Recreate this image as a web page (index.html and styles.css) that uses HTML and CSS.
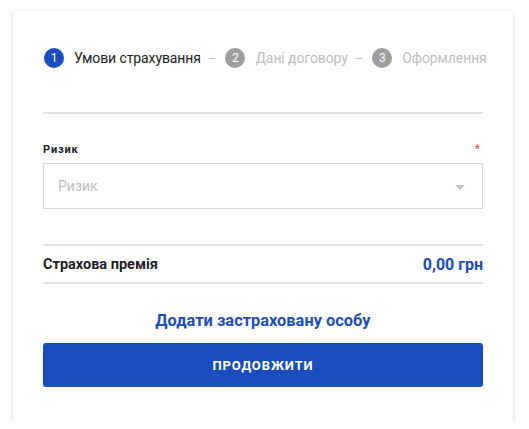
FILE: index.html
```html
<!DOCTYPE html>
<html lang="uk">
<head>
<meta charset="utf-8">
<link rel="stylesheet" href="styles.css">
</head>
<body>
<div class="card">
  <div class="steps">
    <div class="step active"><span class="num">1</span><span class="label">Умови страхування</span></div>
    <span class="dash">–</span>
    <div class="step"><span class="num">2</span><span class="label">Дані договору</span></div>
    <span class="dash">–</span>
    <div class="step"><span class="num">3</span><span class="label">Оформлення</span></div>
  </div>
  <div class="divider top-divider"></div>
  <div class="field">
    <div class="field-head"><span class="field-label">Ризик</span><span class="req">*</span></div>
    <div class="select">
      <span class="placeholder">Ризик</span>
      <svg class="arrow" width="10" height="5" viewBox="0 0 10 5"><path d="M0 0h10L5 5z" fill="#c4c4c4"/></svg>
    </div>
  </div>
  <div class="divider sum-top"></div>
  <div class="sum-row">
    <span class="sum-label">Страхова премія</span>
    <span class="sum-value">0,00 грн</span>
  </div>
  <div class="divider"></div>
  <div class="add-link">Додати застраховану особу</div>
  <button class="btn">ПРОДОВЖИТИ</button>
</div>
</body>
</html>
```
FILE: styles.css
```css
* { box-sizing: border-box; }
body {
  margin: 0;
  background: #fff;
  font-family: Roboto, "Noto Sans", sans-serif;
}
.card {
  margin: 11px 0 0 13px;
  width: 500px;
  height: 410px;
  background: #fff;
  box-shadow: 0 1px 4px rgba(0,0,0,0.18);
  border-radius: 2px;
  padding: 37px 30px 0 30px;
}
.steps {
  display: flex;
  align-items: center;
  height: 20px;
  white-space: nowrap;
  margin-left: 1px;
}
.step {
  display: flex;
  align-items: center;
}
.num {
  width: 20px;
  height: 20px;
  border-radius: 50%;
  background: #9e9e9e;
  color: #fff;
  font-size: 12px;
  display: flex;
  align-items: center;
  justify-content: center;
  margin-right: 10px;
}
.step.active .num { background: #1a4dbd; }
.label {
  font-size: 14px;
  letter-spacing: -0.1px;
  color: #bdbdbd;
}
.step.active .label { color: #212121; }
.dash {
  color: #bdbdbd;
  font-size: 13px;
  margin: 0 9px 0 7px;
}
.divider {
  height: 2px;
  background: #e0e0e0;
}
.top-divider { margin-top: 44px; }
.field { margin-top: 28px; }
.field-head {
  display: flex;
  justify-content: space-between;
  align-items: center;
  height: 14px;
}
.field-label {
  font-size: 11px;
  font-weight: 700;
  color: #212121;
  letter-spacing: 0.8px;
}
.req {
  color: #f44336;
  font-size: 12px;
  margin-right: 3px;
}
.select {
  margin-top: 7px;
  height: 46px;
  border: 1px solid #d9d9d9;
  display: flex;
  align-items: center;
  justify-content: space-between;
  padding: 0 17px 0 14px;
}
.placeholder {
  font-size: 14px;
  color: #bdbdbd;
}
.arrow { margin-top: 2px; }
.sum-top { margin-top: 35px; }
.sum-row {
  height: 36px;
  display: flex;
  justify-content: space-between;
  align-items: center;
}
.sum-label {
  font-size: 14.5px;
  font-weight: 700;
  color: #212121;
}
.sum-value {
  font-size: 16px;
  font-weight: 700;
  color: #1a4dbd;
}
.add-link {
  margin-top: 27px;
  text-align: center;
  font-size: 16.4px;
  font-weight: 700;
  color: #1a4dbd;
  line-height: 20px;
}
.btn {
  display: block;
  width: 100%;
  margin-top: 12px;
  height: 44px;
  border: none;
  border-radius: 3px;
  background: #1a4dbd;
  color: #fff;
  font-family: Roboto, sans-serif;
  font-size: 13px;
  font-weight: 700;
  letter-spacing: 0.9px;
}
```
